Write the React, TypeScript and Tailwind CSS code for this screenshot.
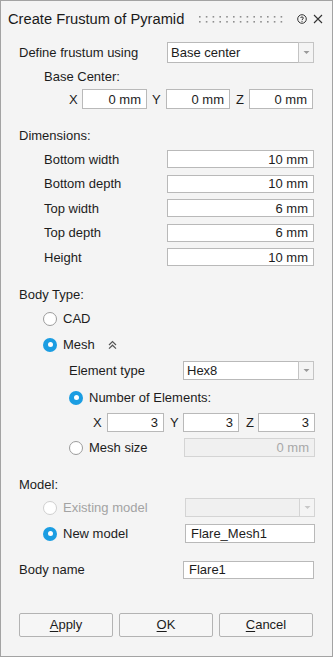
import React from "react";

const font = { fontFamily: '"Liberation Sans", Arial, sans-serif' };

function Box({
  w,
  h = 18,
  value,
  right = false,
  disabled = false,
}: {
  w: number;
  h?: number;
  value: string;
  right?: boolean;
  disabled?: boolean;
}) {
  return (
    <div
      className={`flex items-center border px-[5px] text-[13px] ${
        right ? "justify-end" : "justify-start"
      } ${
        disabled
          ? "border-[#d4d4d4] bg-[#f0f0f0] text-[#a8a8a8]"
          : "border-[#b9b9b9] bg-white text-[#1c1c1c]"
      }`}
      style={{ width: w, height: h }}
    >
      {value}
    </div>
  );
}

function Select({
  w,
  h = 19,
  value,
  disabled = false,
}: {
  w: number;
  h?: number;
  value: string;
  disabled?: boolean;
}) {
  return (
    <div className="flex" style={{ height: h }}>
      <div
        className={`flex items-center border px-[3px] text-[13px] ${
          disabled
            ? "border-[#d4d4d4] bg-[#f0f0f0]"
            : "border-[#b9b9b9] bg-white text-[#1c1c1c]"
        }`}
        style={{ width: w, height: h }}
      >
        {value}
      </div>
      <div
        className={`-ml-px flex w-[16px] items-center justify-center border ${
          disabled ? "border-[#d4d4d4]" : "border-[#c4c4c4]"
        } bg-[#f4f4f4]`}
        style={{ height: h }}
      >
        <svg width="7" height="5" viewBox="0 0 7 5">
          <path d="M0.5 1 L3.5 4 L6.5 1 Z" fill={disabled ? "#c8c8c8" : "#9a9a9a"} />
        </svg>
      </div>
    </div>
  );
}

function Radio({ on = false, disabled = false }: { on?: boolean; disabled?: boolean }) {
  if (on) {
    return (
      <div className="flex h-[14px] w-[14px] items-center justify-center rounded-full bg-[#1b9de2]">
        <div className="h-[5px] w-[5px] rounded-full bg-white" />
      </div>
    );
  }
  return (
    <div
      className={`h-[14px] w-[14px] rounded-full border bg-white ${
        disabled ? "border-[#cfcfcf]" : "border-[#9c9c9c]"
      }`}
    />
  );
}

function Grip() {
  const dots = [];
  for (let i = 0; i < 13; i++) {
    dots.push(<rect key={`a${i}`} x={i * 6.8} y={0} width="1.6" height="1.6" fill="#8f8f8f" />);
    dots.push(<rect key={`b${i}`} x={i * 6.8} y={5} width="1.6" height="1.6" fill="#8f8f8f" />);
  }
  return (
    <svg width="86" height="7" viewBox="0 0 86 7">
      {dots}
    </svg>
  );
}

function Button({ u, rest }: { u: string; rest: string }) {
  return (
    <div className="flex h-[24px] w-[94px] items-center justify-center rounded-[2px] border border-[#b3b3b3] bg-[#f6f6f6] text-[13px] text-[#1c1c1c]">
      <span>
        <span className="underline underline-offset-2">{u}</span>
        {rest}
      </span>
    </div>
  );
}

export default function App() {
  return (
    <div
      className="flex h-[657px] w-[333px] flex-col border border-[#a3a3a3] bg-[#f4f4f4] text-[13px] leading-none text-[#1c1c1c]"
      style={font}
    >
      {/* Title bar */}
      <div className="flex h-[36px] items-center pl-[7px] pr-[9px]">
        <span className="text-[14.7px] text-[#1a1a1a]">Create Frustum of Pyramid</span>
        <div className="ml-auto flex items-center">
          <Grip />
          <svg className="ml-[12px]" width="10" height="10" viewBox="0 0 10 10">
            <circle cx="5" cy="5" r="4.3" fill="none" stroke="#333" strokeWidth="1" />
            <path
              d="M3.6 4 C3.6 2.6 6.4 2.6 6.4 4 C6.4 5 5 5 5 6.1"
              fill="none"
              stroke="#333"
              strokeWidth="1"
            />
            <rect x="4.5" y="6.9" width="1" height="1" fill="#333" />
          </svg>
          <svg className="ml-[6px]" width="10" height="10" viewBox="0 0 10 10">
            <path d="M1 1 L9 9 M9 1 L1 9" stroke="#333" strokeWidth="1.1" />
          </svg>
        </div>
      </div>

      {/* Define frustum using */}
      <div className="mt-[5px] flex h-[21px] items-center pl-[18px]">
        <span className="w-[148px]">Define frustum using</span>
        <Select w={132} h={21} value="Base center" />
      </div>

      <div className="mt-[4px] flex h-[18px] items-center pl-[43px]">Base Center:</div>

      <div className="mt-[4px] flex h-[20px] items-center pl-[68px]">
        <span className="w-[13px]">X</span>
        <Box w={65} h={20} value="0 mm" right />
        <span className="w-[19px] pl-[5px]">Y</span>
        <Box w={64} h={20} value="0 mm" right />
        <span className="w-[19px] pl-[6px]">Z</span>
        <Box w={64} h={20} value="0 mm" right />
      </div>

      {/* Dimensions */}
      <div className="mt-[17px] flex h-[18px] items-center pl-[18px]">Dimensions:</div>
      <div className="mt-[3px] flex flex-col">
        {[
          ["Bottom width", "10 mm"],
          ["Bottom depth", "10 mm"],
          ["Top width", "6 mm"],
          ["Top depth", "6 mm"],
          ["Height", "10 mm"],
        ].map(([l, v]) => (
          <div key={l} className="flex h-[24.5px] items-center pl-[43px]">
            <span className="w-[123px]">{l}</span>
            <Box w={147} h={18} value={v} right />
          </div>
        ))}
      </div>

      {/* Body Type */}
      <div className="mt-[16px] flex h-[18px] items-center pl-[18px]">Body Type:</div>
      <div className="mt-[2px] flex h-[26px] items-center pl-[42px]">
        <Radio />
        <span className="ml-[6px]">CAD</span>
      </div>
      <div className="flex h-[26px] items-center pl-[42px]">
        <Radio on />
        <span className="ml-[6px]">Mesh</span>
        <svg className="ml-[13px]" width="9" height="10" viewBox="0 0 9 10">
          <path d="M1 5 L4.5 1.6 L8 5 M1 8.6 L4.5 5.2 L8 8.6" fill="none" stroke="#555" strokeWidth="1.2" />
        </svg>
      </div>
      <div className="flex h-[26px] items-center pl-[68px]">
        <span className="w-[114px]">Element type</span>
        <Select w={116} h={19} value="Hex8" />
      </div>
      <div className="mt-[1px] flex h-[26px] items-center pl-[68px]">
        <Radio on />
        <span className="ml-[6px]">Number of Elements:</span>
      </div>
      <div className="flex h-[24px] items-center pl-[92px]">
        <span className="w-[14px]">X</span>
        <Box w={57} h={19} value="3" right />
        <span className="w-[19px] pl-[6px]">Y</span>
        <Box w={56} h={19} value="3" right />
        <span className="w-[19px] pl-[7px]">Z</span>
        <Box w={57} h={19} value="3" right />
      </div>
      <div className="flex h-[26px] items-center pl-[68px]">
        <Radio />
        <span className="ml-[6px] w-[95px]">Mesh size</span>
        <Box w={131} h={19} value="0 mm" right disabled />
      </div>

      {/* Model */}
      <div className="mt-[15px] flex h-[18px] items-center pl-[18px]">Model:</div>
      <div className="mt-[1px] flex h-[26px] items-center pl-[42px]">
        <Radio disabled />
        <span className="ml-[6px] w-[122px] text-[#a3a3a3]">Existing model</span>
        <Select w={115} h={19} value="" disabled />
      </div>
      <div className="flex h-[26px] items-center pl-[42px]">
        <Radio on />
        <span className="ml-[6px] w-[122px]">New model</span>
        <Box w={130} h={19} value="Flare_Mesh1" />
      </div>

      <div className="mt-[10px] flex h-[26px] items-center pl-[18px]">
        <span className="w-[164px]">Body name</span>
        <Box w={131} h={18} value="Flare1" />
      </div>

      {/* Buttons */}
      <div className="mt-[30px] flex h-[24px] items-center gap-[6px] pl-[18px]">
        <Button u="A" rest="pply" />
        <Button u="O" rest="K" />
        <Button u="C" rest="ancel" />
      </div>
    </div>
  );
}
